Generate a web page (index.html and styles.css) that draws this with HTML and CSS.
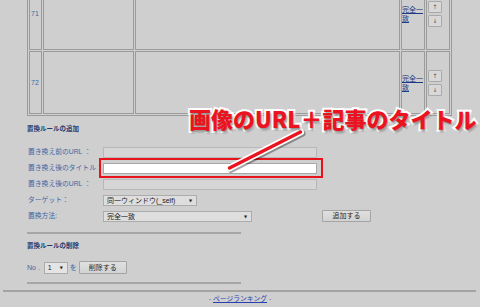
FILE: index.html
```html
<!DOCTYPE html>
<html lang="ja">
<head>
<meta charset="utf-8">
<title>置換ルール</title>
<link rel="stylesheet" href="styles.css">
</head>
<body>
<div class="page">
  <table class="rules">
    <tr class="r71">
      <td class="c1 no">71</td>
      <td class="c2"></td>
      <td class="c3"></td>
      <td class="c4 mt"><a href="#">完全一致</a></td>
      <td class="c5 ud"><button class="mv">↑</button><button class="mv">↓</button></td>
    </tr>
    <tr class="r72">
      <td class="no">72</td>
      <td></td>
      <td></td>
      <td class="mt"><a href="#">完全一致</a></td>
      <td class="ud"><button class="mv">↑</button><button class="mv">↓</button></td>
    </tr>
  </table>

  <h3 class="sec-title">置換ルールの追加</h3>
  <div class="form">
    <label class="lbl">置き換え前のURL&nbsp;：</label>
    <input class="txt" type="text">
    <span></span>
    <label class="lbl">置き換え後のタイトル：</label>
    <input class="txt white" type="text">
    <span></span>
    <label class="lbl">置き換え後のURL&nbsp;：</label>
    <input class="txt" type="text">
    <span></span>
    <label class="lbl">ターゲット：</label>
    <div class="select w-target"><span>同一ウィンドウ(_self)</span><span class="caret">▼</span></div>
    <span></span>
    <label class="lbl">置換方法:</label>
    <div class="select w-method"><span>完全一致</span><span class="caret">▼</span></div>
    <button class="btn add">追加する</button>
  </div>

  <div class="rule"></div>

  <h3 class="sec-title t2">置換ルールの削除</h3>
  <div class="delrow">
    <span class="lbl">No .</span>
    <div class="select w-no"><span>1</span><span class="caret">▼</span></div>
    <span class="lbl wo">を</span>
    <button class="btn del">削除する</button>
  </div>

  <div class="rule r2"></div>
</div>
<div class="full"></div>
<footer class="foot">- <a href="#">ページランキング</a> -</footer>

<div class="hilite"></div>
<svg class="pointer" width="480" height="307" viewBox="0 0 480 307">
  <line x1="302" y1="133.5" x2="231" y2="169.5" stroke="rgba(0,0,0,0.35)" stroke-width="7" stroke-linecap="round"/>
  <line x1="300.5" y1="132" x2="229.5" y2="168" stroke="#ffffff" stroke-width="7" stroke-linecap="round"/>
  <line x1="300.5" y1="132" x2="229.5" y2="168" stroke="#ea1320" stroke-width="3.5" stroke-linecap="round"/>
</svg>
<div class="callout">画像のURL＋記事のタイトル</div>
</body>
</html>
```

FILE: styles.css
```css
* { box-sizing: border-box; }
html, body { margin: 0; padding: 0; }
body {
  width: 480px;
  height: 307px;
  overflow: hidden;
  position: relative;
  background: #cfcfcf;
  font-family: "Liberation Sans", "Noto Sans CJK JP", sans-serif;
  color: #3f66a3;
}
.page { padding-left: 27px; }

/* table */
.rules {
  margin-top: -25px;
  border-collapse: separate;
  border-spacing: 1px;
  border: 1px solid #9b9b9b;
  table-layout: fixed;
  width: 425px;
}
.rules td {
  border: 1px solid #9b9b9b;
  padding: 0;
  vertical-align: middle;
}
.r71 td { height: 73px; }
.r72 td { height: 63px; }
.c1 { width: 13px; }
.c2 { width: 91px; }
.c3 { width: 265px; }
.c4 { width: 24px; }
.c5 { width: 24px; }
.no { font-size: 7px; color: #3d6aa0; padding-left: 1px !important; }
.mt { font-size: 7px; line-height: 9px; }
.mt a { color: #1c3a82; text-decoration: underline; }
.ud { padding-left: 1px !important; }
.mv {
  display: block;
  width: 14px;
  height: 12px;
  margin: 0 0 2px;
  padding: 0;
  border: 1px solid #a9a9a9;
  border-radius: 1px;
  background: #d8d8d8;
  color: #555;
  font-size: 6px;
  line-height: 10px;
  font-family: "DejaVu Sans", sans-serif;
}
.mv:last-child { margin-bottom: 0; }

/* headings */
.sec-title {
  margin: 9px 0 0;
  font-size: 6.5px;
  line-height: 8px;
  font-weight: bold;
  color: #1e3b70;
}
.sec-title.t2 { margin-top: 8px; }

/* form */
.form {
  display: grid;
  grid-template-columns: 76px 214px auto;
  grid-auto-rows: 12px;
  row-gap: 4px;
  margin-top: 13px;
  align-items: center;
}
.lbl {
  font-size: 6.8px;
  line-height: 8px;
  white-space: nowrap;
  padding-left: 1px;
  color: #3f66a3;
}
.txt {
  display: block;
  width: 214px;
  height: 11px;
  margin: 0;
  padding: 0;
  border: 1px solid #b8b8b8;
  background: #d6d6d6;
}
.txt.white { background: #ffffff; border-color: #a8a8a8; }
.select {
  display: flex;
  align-items: center;
  justify-content: space-between;
  height: 11px;
  padding: 0 4px 0 3px;
  border: 1px solid #acacac;
  background: #dedede;
  color: #222;
  font-size: 7px;
  line-height: 9px;
  white-space: nowrap;
}
.caret { font-size: 4px; color: #222; font-family: "DejaVu Sans", sans-serif; }
.w-target { width: 94px; }
.w-method { width: 149px; }
.w-no { width: 24px; height: 12px; background: #e4e4e4; }
.btn {
  margin: 0;
  padding: 0;
  border: 1px solid #a4a4a4;
  border-radius: 1px;
  background: linear-gradient(#e0e0e0, #d2d2d2);
  color: #2a2a2a;
  font-family: "Liberation Sans", "Noto Sans CJK JP", sans-serif;
  font-size: 7px;
  line-height: 10px;
}
.btn.add { width: 49px; height: 12px; margin-left: 5px; }
.btn.del { width: 48px; height: 13px; }

.rule {
  width: 214px;
  margin-top: 10px;
  border-top: 2px solid #a6a6a6;
}
.rule.r2 { margin-top: 8px; }

.delrow {
  display: flex;
  align-items: center;
  height: 13px;
  margin-top: 11px;
}
.delrow .lbl { font-size: 7px; padding-left: 0; }
.delrow .select { margin-left: 4px; }
.delrow .wo { margin: 0 2px 0 2px; }

.full {
  margin: 6px 4px 0 3px;
  border-top: 2px solid #a3a3a3;
}
.foot {
  margin-top: 3px;
  text-align: center;
  font-size: 6.8px;
  line-height: 8px;
  color: #5a6fa0;
}
.foot a { color: #2a3fb0; text-decoration: underline; }

/* annotation overlay */
.hilite {
  position: absolute;
  left: 99px;
  top: 158px;
  width: 224px;
  height: 20px;
  border: 2px solid #e8141c;
}
.pointer { position: absolute; left: 0; top: 0; }
.callout {
  position: absolute;
  left: 189px;
  top: 105px;
  font-family: "Noto Sans CJK JP", sans-serif;
  font-size: 22px;
  line-height: 26px;
  font-weight: 900;
  color: #ec1320;
  white-space: nowrap;
  -webkit-text-stroke: 4px #ffffff;
  paint-order: stroke fill;
  text-shadow: 1px 2px 2px rgba(0, 0, 0, 0.45);
}
```
